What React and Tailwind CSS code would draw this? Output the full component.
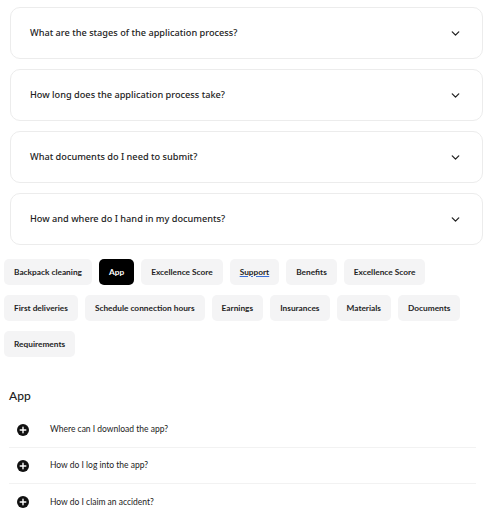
import { ChevronDown } from "lucide-react";

const questions = [
  "What are the stages of the application process?",
  "How long does the application process take?",
  "What documents do I need to submit?",
  "How and where do I hand in my documents?",
];

const tags = [
  "Backpack cleaning",
  "App",
  "Excellence Score",
  "Support",
  "Benefits",
  "Excellence Score",
  "First deliveries",
  "Schedule connection hours",
  "Earnings",
  "Insurances",
  "Materials",
  "Documents",
  "Requirements",
];

const appQuestions = [
  "Where can I download the app?",
  "How do I log into the app?",
  "How do I claim an accident?",
];

function PlusIcon() {
  return (
    <svg width="12" height="12" viewBox="0 0 12 12">
      <circle cx="6" cy="6" r="6" fill="#111" />
      <path d="M6 3.2v5.6M3.2 6h5.6" stroke="#fff" strokeWidth="1.4" strokeLinecap="round" />
    </svg>
  );
}

export default function App() {
  return (
    <div className="w-[493px] h-[512px] bg-white overflow-hidden font-['Noto_Sans',sans-serif] text-[#1f1f1f]">

      {/* FAQ CARDS */}
      <div className="flex flex-col gap-[10px] pl-[10px] pr-[10px] pt-[7px]">
        {questions.map((q, i) => (
          <div
            key={i}
            className="h-[52px] rounded-[10px] border border-[#ececec] flex items-center justify-between pl-[19px] pr-[20px]"
          >
            <span className="text-[9.2px] font-medium text-[#222]">{q}</span>
            <ChevronDown size={13} strokeWidth={2.4} className="text-[#222]" />
          </div>
        ))}
      </div>

      {/* TAGS */}
      <div className="flex flex-wrap gap-x-[7px] gap-y-[10px] pl-[4px] pr-[10px] mt-[14px] font-['Lato',sans-serif]">
        {tags.map((t, i) => (
          <div
            key={i}
            className={
              i === 1
                ? "h-[26px] px-[10px] rounded-[5px] bg-black text-white flex items-center text-[8.3px] font-bold"
                : "h-[26px] px-[10px] rounded-[5px] bg-[#f4f4f5] text-[#1f1f1f] flex items-center text-[8.3px] font-bold"
            }
          >
            {t === "Support" ? (
              <span className="underline decoration-[#3b6fd6]">{t}</span>
            ) : (
              t
            )}
          </div>
        ))}
      </div>

      {/* APP SECTION */}
      <div className="mt-[30px] pl-[9px] pr-[17px] font-['Lato',sans-serif]">
        <h2 className="text-[12px] font-medium text-[#222]">App</h2>
        <div className="mt-[7px]">
          {appQuestions.map((q, i) => (
            <div
              key={i}
              className={
                i < appQuestions.length - 1
                  ? "h-[36px] flex items-center gap-[21px] pl-[8px] border-b border-[#f2f2f2]"
                  : "h-[36px] flex items-center gap-[21px] pl-[8px]"
              }
            >
              <PlusIcon />
              <span className="text-[8.5px] text-[#222]">{q}</span>
            </div>
          ))}
        </div>
      </div>

    </div>
  );
}
